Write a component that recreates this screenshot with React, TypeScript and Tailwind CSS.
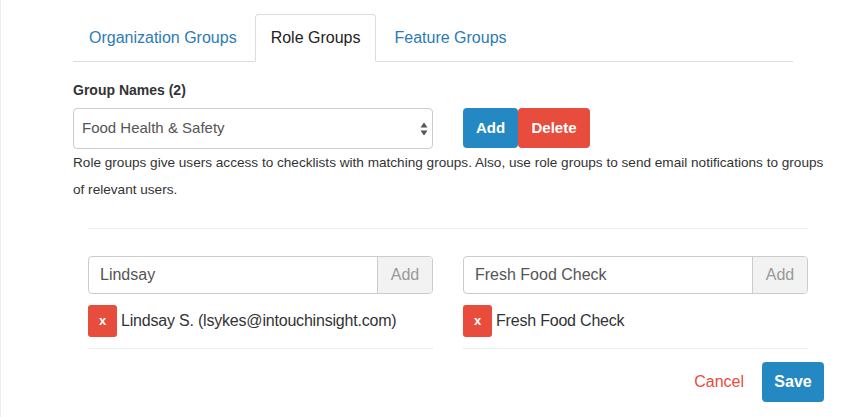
import React from 'react';

const font = { fontFamily: '"Liberation Sans", Arial, Helvetica, sans-serif' };

function Tab({ label, active }: { label: string; active?: boolean }) {
  if (active) {
    return (
      <div className="h-[48px] -mb-px px-[15px] flex items-center bg-white border border-[#ddd] border-b-white rounded-t-[4px] mr-[2px] text-[16px] text-[#222]">
        {label}
      </div>
    );
  }
  return (
    <div className="h-[47px] px-[16px] flex items-center mr-[2px] text-[16px] text-[#2c7bb6]">
      {label}
    </div>
  );
}

function SelectArrows() {
  return (
    <svg width="8" height="14" viewBox="0 0 8 14" className="text-[#555]">
      <path d="M4 0.5 L7.5 5.5 L0.5 5.5 Z" fill="currentColor" />
      <path d="M4 13.5 L7.5 8.5 L0.5 8.5 Z" fill="currentColor" />
    </svg>
  );
}

function LookupColumn({ value, item }: { value: string; item: string }) {
  return (
    <div className="flex flex-col">
      <div className="flex h-[38px] border border-[#ccc] rounded-[4px] overflow-hidden">
        <div className="flex-1 flex items-center pl-[11px] text-[16px] text-[#555]">{value}</div>
        <div className="w-[55px] flex items-center justify-center bg-[#f2f2f2] border-l border-[#ccc] text-[16px] text-[#999]">
          Add
        </div>
      </div>
      <div className="flex items-center mt-[11px]">
        <div className="w-[29px] h-[32px] rounded-[3px] bg-[#e74c3c] text-white font-bold text-[13px] flex items-center justify-center">
          x
        </div>
        <span className="ml-[4px] text-[16px] tracking-[-0.2px] text-[#333]">{item}</span>
      </div>
      <div className="mt-[11px] border-t border-[#eee]" />
    </div>
  );
}

export default function App() {
  return (
    <div className="w-[863px] h-[417px] bg-white border-l border-[#eee] overflow-hidden" style={font}>
      <div className="pl-[72px] pr-[40px] pt-[14px]">
        {/* Tabs */}
        <div className="w-[720px] flex items-end border-b border-[#ddd]">
          <Tab label="Organization Groups" />
          <Tab label="Role Groups" active />
          <Tab label="Feature Groups" />
        </div>

        <div className="mt-[18px] text-[14px] leading-[20px] font-bold text-[#333]">Group Names (2)</div>

        <div className="mt-[8px] flex items-start">
          <div className="w-[360px] h-[41px] border border-[#ccc] rounded-[4px] flex items-center justify-between pl-[8px] pr-[4px] text-[15px] text-[#555]">
            <span>Food Health &amp; Safety</span>
            <SelectArrows />
          </div>
          <div className="ml-[30px] flex">
            <button className="w-[55px] h-[40px] bg-[#2489c2] text-white text-[15px] font-bold rounded-[4px]">Add</button>
            <button className="w-[72px] h-[40px] bg-[#e74c3c] text-white text-[15px] font-bold rounded-[4px]">Delete</button>
          </div>
        </div>

        <p className="w-[752px] text-[13.6px] leading-[27px] text-[#333]">
          Role groups give users access to checklists with matching groups. Also, use role groups to send email notifications to groups of relevant users.
        </p>

        {/* Members / checklists */}
        <div className="w-[750px] px-[15px]">
          <div className="mt-[25px] border-t border-[#eee]" />
          <div className="mt-[27px] grid grid-cols-2 gap-[30px]">
            <LookupColumn value="Lindsay" item="Lindsay S. (lsykes@intouchinsight.com)" />
            <LookupColumn value="Fresh Food Check" item="Fresh Food Check" />
          </div>
        </div>

        <div className="w-[751px] mt-[13px] flex items-center justify-end">
          <span className="text-[16px] text-[#e74c3c]">Cancel</span>
          <button className="ml-[18px] w-[62px] h-[40px] bg-[#2489c2] text-white text-[16px] font-bold rounded-[4px]">Save</button>
        </div>
      </div>
    </div>
  );
}
